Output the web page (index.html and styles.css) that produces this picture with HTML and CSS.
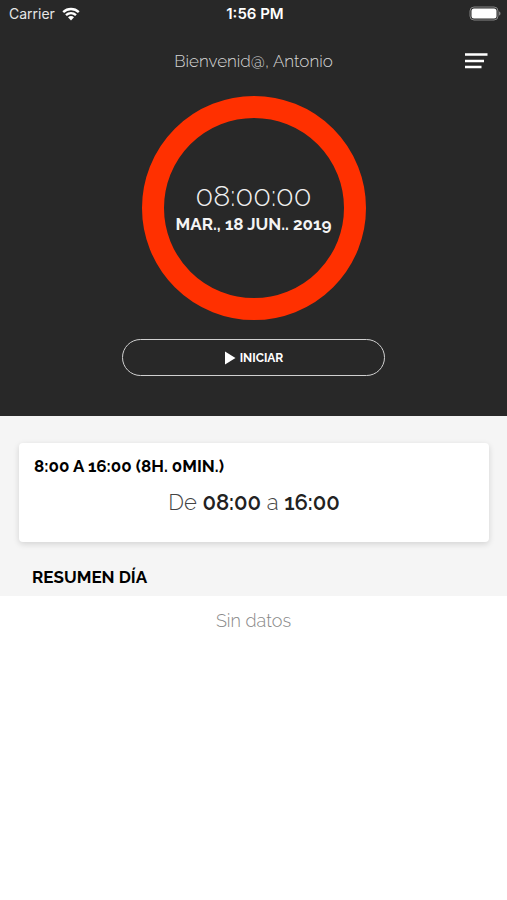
FILE: index.html
```html
<!DOCTYPE html>
<html lang="es">
<head>
<meta charset="utf-8">
<meta name="viewport" content="width=device-width, initial-scale=1">
<title>Control horario</title>
<link rel="stylesheet" href="styles.css">
</head>
<body>
<section class="hero">
  <div class="status">
    <div class="carrier">
      <span>Carrier</span>
      <svg class="wifi" viewBox="0 0 18 14" aria-hidden="true">
        <path d="M1.2 5.2C5.6 1 12.4 1 16.8 5.2M4 8.2c2.9-2.7 7.1-2.7 10 0"/>
        <path class="wifi-dot" d="M6 10.2c1.8-1.6 4.2-1.6 6 0L9 13.4z"/>
      </svg>
    </div>
    <time class="clock">1:56 PM</time>
    <svg class="battery" viewBox="0 0 32 16" aria-hidden="true">
      <rect class="battery-case" x="1" y="1" width="28" height="13" rx="4"/>
      <rect class="battery-level" x="2.500" y="2.500" width="25" height="10" rx="2.500"/>
      <path class="battery-tip" d="M30 5.500c2 .5 2 3.500 0 4z"/>
    </svg>
  </div>
  <header class="header">
    <h1 class="greeting">Bienvenid@, Antonio</h1>
    <button class="menu" type="button" aria-label="Menú">
      <svg viewBox="0 0 24 18" aria-hidden="true"><path d="M1 2.500h22.500M1 9h19M1 15h16.500"/></svg>
    </button>
  </header>
  <div class="ring">
    <div class="timer">08:00:00</div>
    <div class="date">MAR., 18 JUN.. 2019</div>
  </div>
  <button class="start" type="button">
    <svg viewBox="0 0 12 14" aria-hidden="true"><path d="M1 0.500L11.500 7 1 13.500z"/></svg>
    <span>INICIAR</span>
  </button>
</section>
<main class="summary">
  <article class="card">
    <h2 class="title">8:00 A 16:00 (8H. 0MIN.)</h2>
    <p class="hours">De <strong>08:00</strong> a <strong>16:00</strong></p>
  </article>
  <h2 class="title day">RESUMEN DÍA</h2>
</main>
<p class="empty">Sin datos</p>
</body>
</html>
```
FILE: styles.css
```css
* { box-sizing: border-box; }

body {
  margin: 0;
  background: #fff;
  color: #000;
  font-family: Raleway, Lato, sans-serif;
}

h1, h2, p { margin: 0; }

button {
  padding: 0;
  background: none;
  border: 0;
  color: inherit;
  font-family: inherit;
}

svg { display: block; }

.hero {
  display: flex;
  flex-direction: column;
  align-items: center;
  padding-bottom: 40px;
  background: #282828;
  color: #fff;
}

.status {
  display: grid;
  grid-template-columns: 1fr auto 1fr;
  align-items: center;
  width: 100%;
  height: 28px;
  padding: 0 6px 0 9px;
  font: 14px/20px Inter, sans-serif;
}

.carrier {
  display: flex;
  align-items: center;
  gap: 7px;
  color: #e6e6e6;
}

.wifi {
  width: 18px;
  height: 14px;
  fill: none;
  stroke: #fff;
  stroke-width: 2.4;
}

.wifi-dot { fill: #fff; stroke: none; }

.clock {
  font-size: 15px;
  font-weight: 600;
}

.battery {
  justify-self: end;
  width: 32px;
  height: 16px;
}

.battery-case { fill: none; stroke: #858585; }
.battery-level { fill: #fff; }
.battery-tip { fill: #858585; }

.header {
  display: grid;
  grid-template-columns: 1fr auto 1fr;
  align-items: center;
  width: 100%;
  height: 66px;
  padding: 0 19px;
}

.greeting {
  grid-column: 2;
  color: #d4d4d4;
  font-size: 17px;
  font-weight: 300;
  line-height: 24px;
}

.menu { justify-self: end; }

.menu svg {
  width: 24px;
  height: 18px;
  fill: none;
  stroke: #fff;
  stroke-width: 2.6;
}

.ring {
  display: flex;
  flex-direction: column;
  align-items: center;
  justify-content: center;
  width: 224px;
  height: 224px;
  margin-top: 2px;
  border: 22px solid #ff3000;
  border-radius: 50%;
  white-space: nowrap;
}

.timer {
  color: #f0f0f0;
  font-size: 29px;
  font-weight: 300;
  line-height: 32px;
}

.date {
  color: #f4f4f4;
  font-size: 17px;
  font-weight: 700;
  line-height: 24px;
}

.start {
  display: flex;
  align-items: center;
  justify-content: center;
  gap: 4px;
  width: 52%;
  height: 37px;
  margin-top: 19px;
  border: 1px solid #d0d0d0;
  border-radius: 19px;
  font-size: 12px;
  font-weight: 700;
}

.start svg {
  width: 12px;
  height: 14px;
  fill: #fff;
}

.summary {
  padding: 27px 18px 7px 19px;
  background: #f5f5f5;
}

.card {
  padding: 11px 15px 26px;
  background: #fff;
  border-radius: 4px;
  box-shadow: 0 2px 6px rgba(0, 0, 0, 0.14);
}

.title {
  font-size: 17px;
  font-weight: 700;
  line-height: 24px;
}

.hours {
  margin-top: 10px;
  color: #444;
  font-size: 22px;
  font-weight: 300;
  line-height: 28px;
  text-align: center;
}

.hours strong { color: #222; font-weight: 600; }

.day { margin: 23px 0 0 13px; }

.empty {
  padding: 13px;
  color: #888;
  font-size: 18px;
  font-weight: 300;
  line-height: 24px;
  text-align: center;
}
```
